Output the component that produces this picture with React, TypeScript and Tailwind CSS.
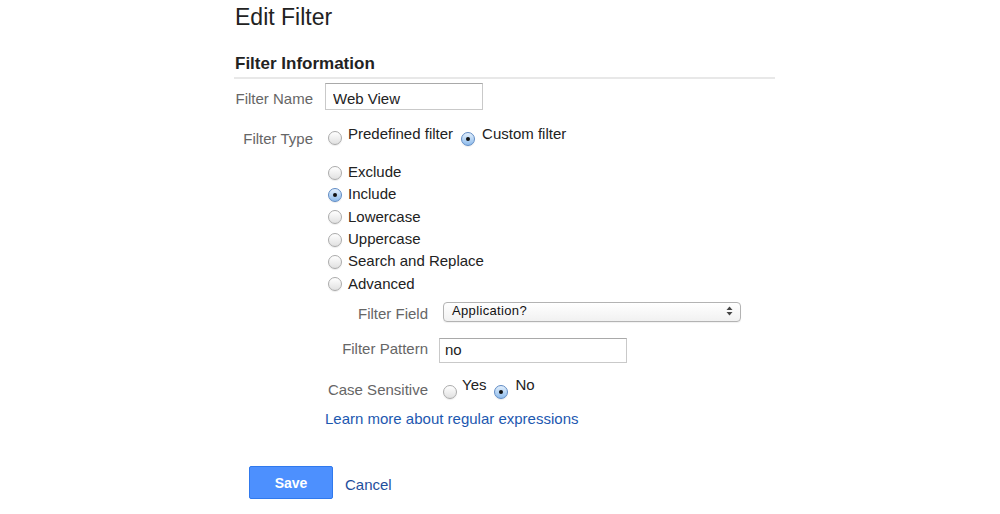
import React from "react";

function Radio({ checked = false, className = "" }: { checked?: boolean; className?: string }) {
  return (
    <span
      className={
        "inline-flex items-center justify-center w-[14px] h-[14px] rounded-full border shrink-0 " +
        (checked
          ? "border-[#5f8bc4] bg-[linear-gradient(180deg,#e2effc,#8fbcec)] "
          : "border-[#ababab] bg-[linear-gradient(180deg,#ffffff,#e1e1e1)] ") +
        "shadow-[0_1px_1px_rgba(0,0,0,0.08)] " +
        className
      }
    >
      {checked && <span className="w-[4px] h-[4px] rounded-full bg-[#111]" />}
    </span>
  );
}

const options = [
  { label: "Exclude", checked: false },
  { label: "Include", checked: true },
  { label: "Lowercase", checked: false },
  { label: "Uppercase", checked: false },
  { label: "Search and Replace", checked: false },
  { label: "Advanced", checked: false },
];

export default function App() {
  return (
    <div className="w-[1000px] h-[514px] overflow-hidden bg-white pl-[235px] font-['Liberation_Sans',Arial,sans-serif] text-[#222]">
      <h1 className="pt-[3px] text-[23px] leading-[28px] font-normal">Edit Filter</h1>
      <h2 className="mt-[23px] w-[541px] -ml-[1px] pl-[1px] pb-[3px] border-b-2 border-[#e8e8e8] text-[17px] leading-[20px] font-bold">
        Filter Information
      </h2>

      {/* Filter Name */}
      <div className="mt-[4px] flex items-start h-[27px]">
        <span className="w-[78px] mt-[6px] text-right text-[15px] leading-[20px] text-[#666] whitespace-nowrap">
          Filter Name
        </span>
        <input
          readOnly
          value="Web View"
          className="ml-[12px] w-[158px] h-[27px] border border-[#c9c9c9] border-t-[#a9a9a9] pl-[7px] pt-[3px] pb-0 text-[15px] leading-[20px] text-[#222] outline-none"
        />
      </div>

      {/* Filter Type */}
      <div className="mt-[14px] flex items-start h-[24px]">
        <span className="w-[78px] mt-[5px] text-right text-[15px] leading-[20px] text-[#666] whitespace-nowrap">
          Filter Type
        </span>
        <div className="ml-[12px] flex items-start text-[15px] leading-[20px] whitespace-nowrap">
          <Radio className="ml-[3px] mt-[7px]" />
          <span className="ml-[6px]">Predefined filter</span>
          <Radio checked className="ml-[8px] mt-[8px]" />
          <span className="ml-[7px]">Custom filter</span>
        </div>
      </div>

      {/* Options */}
      <div className="mt-[13px] ml-[90px] flex flex-col text-[15px] leading-[20px]">
        {options.map((o) => (
          <div key={o.label} className="h-[22.33px] flex items-center whitespace-nowrap">
            <Radio checked={o.checked} className="ml-[3px] mt-[1px]" />
            <span className="ml-[6px]">{o.label}</span>
          </div>
        ))}
      </div>

      {/* Nested fields */}
      <div className="ml-[90px] mt-[7px]">
        <div className="flex items-start h-[20px]">
          <span className="w-[103px] mt-[2px] text-right text-[15px] leading-[20px] text-[#666] whitespace-nowrap">
            Filter Field
          </span>
          <div className="ml-[15px] w-[298px] h-[20px] rounded-[4px] border border-[#b3b3b3] bg-[linear-gradient(180deg,#ffffff,#f1f1f1)] shadow-[0_1px_1px_rgba(0,0,0,0.06)] flex items-start justify-between pl-[8px] pr-[7px]">
            <span className="text-[13px] leading-[14px] tracking-[0.35px] text-[#111] mt-[1px]">Application?</span>
            <svg width="7" height="10" viewBox="0 0 7 10" className="mt-[3px]">
              <path d="M3.5 0.5 L6.5 4 L0.5 4 Z" fill="#444" />
              <path d="M0.5 6 L6.5 6 L3.5 9.5 Z" fill="#444" />
            </svg>
          </div>
        </div>

        <div className="mt-[16px] flex items-start h-[25px]">
          <span className="w-[103px] mt-[1.5px] text-right text-[15px] leading-[20px] text-[#666] whitespace-nowrap">
            Filter Pattern
          </span>
          <input
            readOnly
            value="no"
            className="ml-[11px] w-[188px] h-[25px] border border-[#c9c9c9] border-t-[#a9a9a9] pl-[5px] pt-0 pb-[2px] text-[15px] leading-[20px] text-[#222] outline-none"
          />
        </div>

        <div className="mt-[12.5px] flex items-start h-[26px] whitespace-nowrap">
          <span className="w-[103px] mt-[5px] text-right text-[15px] leading-[20px] text-[#666]">Case Sensitive</span>
          <Radio className="ml-[15px] mt-[10px]" />
          <span className="ml-[5px] text-[15px] leading-[20px]">Yes</span>
          <Radio checked className="ml-[8px] mt-[10px]" />
          <span className="ml-[7px] text-[15px] leading-[20px]">No</span>
        </div>

        <div className="mt-[8px] text-[15px] leading-[20px]">
          <a className="text-[#1d58b0] cursor-pointer">Learn more about regular expressions</a>
        </div>
      </div>

      {/* Buttons */}
      <div className="mt-[37px] ml-[14px] flex items-center">
        <button className="w-[84px] h-[33px] rounded-[2px] border border-[#3079ed] bg-[#4d90fe] text-white font-bold text-[14px] leading-[20px]">
          Save
        </button>
        <a className="ml-[12px] mt-[4px] text-[15px] leading-[20px] text-[#1f4f9c] cursor-pointer">Cancel</a>
      </div>
    </div>
  );
}
